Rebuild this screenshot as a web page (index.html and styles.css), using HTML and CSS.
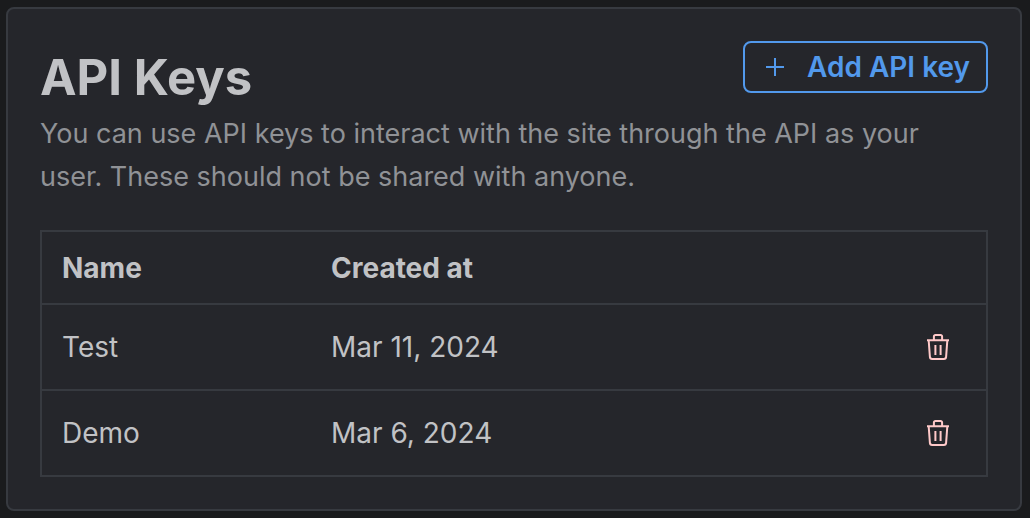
FILE: index.html
```html
<!DOCTYPE html>
<html lang="en">
<head>
<meta charset="utf-8">
<title>API Keys</title>
<link rel="stylesheet" href="styles.css">
</head>
<body>
<svg class="sprite" aria-hidden="true">
  <symbol id="trash" viewBox="0 0 24 26">
    <path d="M1 6.3h22M7.9 6V2.5a1.5 1.5 0 0 1 1.5-1.5h5.2a1.5 1.5 0 0 1 1.5 1.5V6M2.7 6.5l1.2 16.4a2.2 2.2 0 0 0 2.2 2.1h11.8a2.2 2.2 0 0 0 2.2-2.1L21.3 6.5M9.4 11v10M14.6 11v10"/>
  </symbol>
</svg>
<main class="card">
  <header class="header">
    <h1 class="title">API Keys</h1>
    <button class="add" type="button">
      <svg class="plus" viewBox="0 0 20 20" aria-hidden="true"><path d="M10 1v18M1 10h18"/></svg>
      Add API key
    </button>
  </header>
  <p class="description">You can use API keys to interact with the site through the API as your user. These should not be shared with anyone.</p>
  <table class="keys">
    <thead>
      <tr><th class="name">Name</th><th>Created at</th><td class="action"></td></tr>
    </thead>
    <tbody>
      <tr><td>Test</td><td>Mar 11, 2024</td><td class="action"><button class="delete" type="button" aria-label="Delete Test"><svg class="icon"><use href="#trash"/></svg></button></td></tr>
      <tr><td>Demo</td><td>Mar 6, 2024</td><td class="action"><button class="delete" type="button" aria-label="Delete Demo"><svg class="icon"><use href="#trash"/></svg></button></td></tr>
    </tbody>
  </table>
</main>
</body>
</html>
```
FILE: styles.css
```css
* { box-sizing: border-box; }
body { margin: 0; padding: 7px 8px 7px 6px; background: #1a1b1d; color: #c1c2c5; font: 28px/43px Inter, sans-serif; }
.sprite { display: none; }
.card { padding: 32px; border: 2px solid #373a40; border-radius: 8px; background: #25262b; }
.header { display: flex; justify-content: space-between; align-items: flex-start; }
.title { margin: 0; padding-top: 3px; font-size: 49px; line-height: 68px; font-weight: 700; }
.add { display: flex; align-items: center; gap: 22px; height: 52px; padding: 0 16px 0 20px; border: 2px solid #5299ec; border-radius: 8px; background: transparent; color: #5299ec; font: 600 28px/48px Inter, sans-serif; }
.plus { width: 20px; height: 20px; fill: none; stroke: currentColor; stroke-width: 2; }
.description { margin: 0 0 32px; color: #909296; font-size: 27px; }
.keys { width: 100%; border-collapse: collapse; table-layout: fixed; border: 2px solid #373a40; }
.keys tr { height: 86px; border-bottom: 2px solid #373a40; }
.keys thead tr { height: 73px; }
.keys th, .keys td { padding: 0 20px; text-align: left; }
.keys th { padding-top: 2px; font-weight: 700; }
.keys .name { width: 270px; }
.keys .action { width: 90px; padding: 0 36px 0 0; }
.delete { display: flex; margin-left: auto; padding: 0; border: 0; background: transparent; color: #ffc9c9; }
.icon { width: 24px; height: 26px; fill: none; stroke: currentColor; stroke-width: 2; }
```
